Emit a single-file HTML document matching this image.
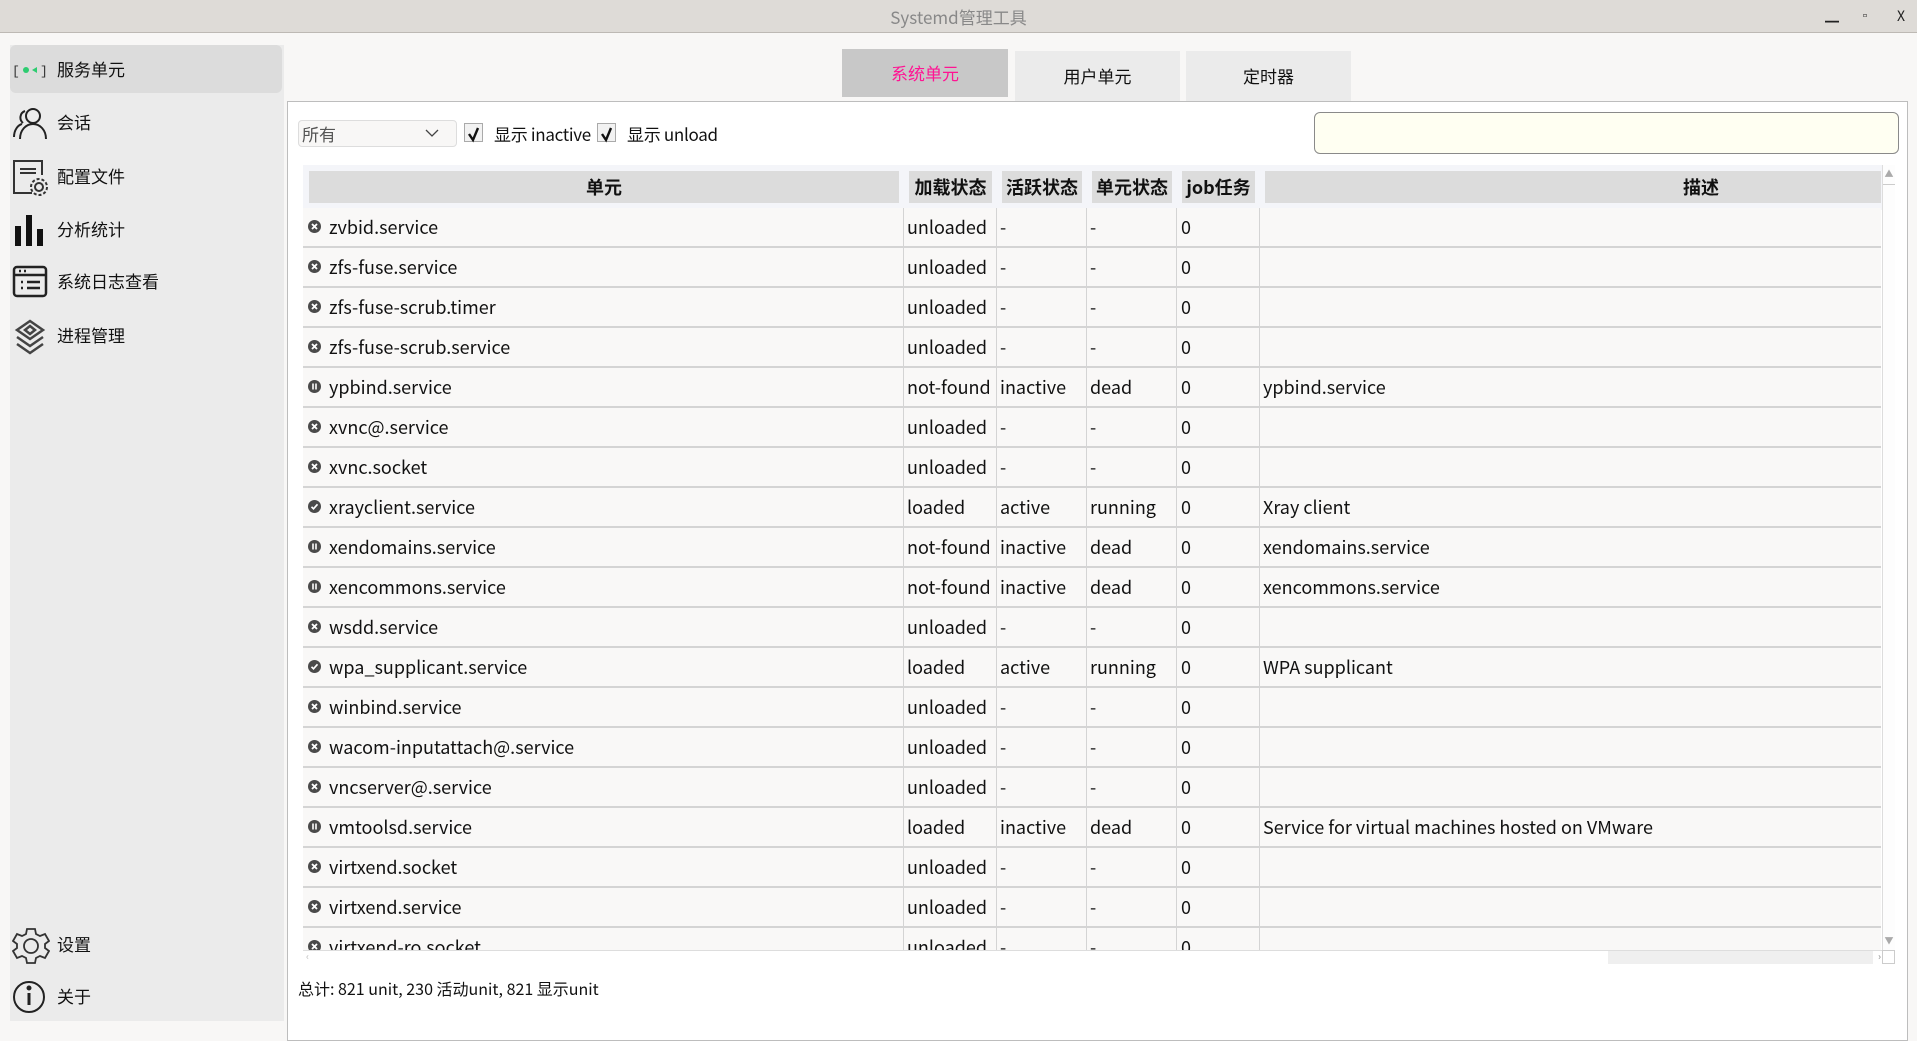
<!DOCTYPE html>
<html><head><meta charset="utf-8"><style>
*{margin:0;padding:0;box-sizing:border-box}
body{width:1917px;height:1027px;background:#f8f7f6;font-family:"Noto Sans CJK SC","Liberation Sans",sans-serif;color:#111;position:relative;overflow:hidden}
.abs{position:absolute}
#title{left:0;top:0;width:1917px;height:33px;background:#dedbd7;border-bottom:1px solid #bdb9b4;text-align:center;font-size:17px;line-height:33px;color:#888}
#side{left:10px;top:45px;width:274px;height:976px;background:#ebebeb}
.it{position:absolute;left:10px;width:272px;height:48px;font-size:17px;line-height:48px;padding-left:47px}
.it svg{position:absolute;left:2px;top:7px}
.sel{background:#dcdcdc;border-radius:6px}
.tab{position:absolute;text-align:center;font-size:17px;background:#ebebeb}
#panel{left:287px;top:101px;width:1621px;height:940px;background:#fff;border:1px solid #bdbdbd}
.hd{position:absolute;top:171px;height:32px;background:#dcdcdc;font-weight:bold;font-size:18px;line-height:32px;text-align:center}
.row{position:absolute;left:303px;width:1578px;height:40px;border-bottom:2px solid #d4d4d4;background:#f9f8f7;font-size:18px;line-height:38px}
.row span{position:absolute;top:0}
.row svg{position:absolute;left:5px;top:12px}
.vl{position:absolute;top:208px;width:1px;height:742px;background:#d4d4d4}
.cb{position:absolute;width:19px;height:19px;border:1px solid #aaa;background:#f2f2f2}
</style></head><body>
<div id="title" class="abs">Systemd管理工具
<span style="position:absolute;right:78px;top:0;color:#222;font-size:14px">▁</span>
<span style="position:absolute;right:46px;top:-1px;color:#222;font-size:12px">▫</span>
<span style="position:absolute;right:12px;top:0;color:#222;font-size:14px">X</span></div>
<div id="side" class="abs"></div>
<div class="it sel" style="top:45px"><svg width="36" height="34" viewBox="0 0 36 34"><text x="0" y="23" font-size="13" font-family="Liberation Mono" fill="#333">[</text><circle cx="14" cy="18" r="3" fill="#2ecc71"/><path d="M25 15 L20 18 L25 21Z" fill="#2ecc71"/><text x="28" y="23" font-size="13" font-family="Liberation Mono" fill="#333">]</text></svg>服务单元</div>
<div class="it" style="top:98px"><svg width="36" height="36" viewBox="0 0 36 36" fill="none" stroke="#222" stroke-width="2"><circle cx="21" cy="11" r="7"/><path d="M8 34c0-9 6-15 13-15s13 6 13 15"/><path d="M13 6a7 7 0 0 0-2 12M2 32c0-7 4-12 8-13"/></svg>会话</div>
<div class="it" style="top:152px"><svg width="38" height="38" viewBox="0 0 38 38" fill="none" stroke="#333" stroke-width="2"><path d="M20 34H2V2h28v14"/><path d="M8 10h16M8 14h16"/><circle cx="27" cy="28" r="4"/><circle cx="27" cy="28" r="8" stroke-dasharray="3 2"/></svg>配置文件</div>
<div class="it" style="top:205px"><svg width="36" height="36" viewBox="0 0 36 36" fill="#111"><rect x="3" y="14" width="6" height="20"/><rect x="14" y="3" width="6" height="31"/><rect x="25" y="17" width="6" height="17"/></svg>分析统计</div>
<div class="it" style="top:257px"><svg width="38" height="36" viewBox="0 0 38 36" fill="none" stroke="#222" stroke-width="2.5"><rect x="2" y="3" width="32" height="29" rx="3"/><path d="M2 11h32M7 7h2M12 7h2M9 18h2M15 18h13M9 24h2M15 24h13"/></svg>系统日志查看</div>
<div class="it" style="top:311px"><svg width="36" height="38" viewBox="0 0 36 38" fill="none" stroke="#444" stroke-width="2.5"><path d="M18 3L31 12 18 21 5 12Z"/><path d="M13 12l5-4 5 4-5 4z"/><path d="M5 19l13 9 13-9M5 26l13 9 13-9"/></svg>进程管理</div>
<div class="it" style="top:920px"><svg width="38" height="38" viewBox="0 0 38 38" fill="none" stroke="#333" stroke-width="1.8"><path d="M15 2h8l1 5 4 2 5-2 4 7-4 3v4l4 3-4 7-5-2-4 2-1 5h-8l-1-5-4-2-5 2-4-7 4-3v-4l-4-3 4-7 5 2 4-2z"/><circle cx="19" cy="19" r="7"/></svg>设置</div>
<div class="it" style="top:972px"><svg width="36" height="36" viewBox="0 0 36 36" fill="none" stroke="#222" stroke-width="2"><circle cx="17" cy="18" r="15"/><path d="M17 14v12" stroke-width="3"/><circle cx="17" cy="9" r="1.5" fill="#222"/></svg>关于</div>

<div id="panel" class="abs"></div>
<div class="tab" style="left:842px;top:49px;width:166px;height:48px;line-height:48px;background:#c8c8c8;color:#ff1493">系统单元</div>
<div class="tab" style="left:1015px;top:51px;width:165px;height:50px;line-height:50px">用户单元</div>
<div class="tab" style="left:1186px;top:51px;width:165px;height:50px;line-height:50px">定时器</div>

<div class="abs" style="left:298px;top:120px;width:159px;height:27px;border:1px solid #ddd;border-radius:4px;background:#f8f7f6;font-size:17px;line-height:25px;padding-left:3px;color:#555">所有<svg class="abs" style="left:126px;top:8px" width="14" height="9" viewBox="0 0 14 9" fill="none" stroke="#444" stroke-width="1.3"><path d="M1 1l6 6 6-6"/></svg></div>
<div class="cb" style="left:464px;top:123px"><svg width="17" height="17" viewBox="0 0 17 17" fill="none" stroke="#111" stroke-width="2.4"><path d="M4 8l4 6 5-12"/></svg></div>
<div class="abs" style="left:494px;top:120px;font-size:17px;line-height:27px;letter-spacing:-0.3px">显示 inactive</div>
<div class="cb" style="left:597px;top:123px"><svg width="17" height="17" viewBox="0 0 17 17" fill="none" stroke="#111" stroke-width="2.4"><path d="M4 8l4 6 5-12"/></svg></div>
<div class="abs" style="left:627px;top:120px;font-size:17px;line-height:27px;letter-spacing:-0.3px">显示 unload</div>
<div class="abs" style="left:1314px;top:112px;width:585px;height:42px;border:1.5px solid #8a8a8a;border-radius:6px;background:#fffff2"></div>

<div class="abs" style="left:303px;top:165px;width:1580px;height:45px;background:#f4f5f9"></div>
<div class="hd" style="left:309px;width:590px">单元</div>
<div class="hd" style="left:909px;width:83px">加载状态</div>
<div class="hd" style="left:1002px;width:80px">活跃状态</div>
<div class="hd" style="left:1092px;width:80px">单元状态</div>
<div class="hd" style="left:1182px;width:73px">job任务</div>
<div class="hd" style="left:1265px;width:616px;text-align:left;padding-left:418px">描述</div>

<div class="abs" style="left:303px;top:208px;width:1580px;height:742px;overflow:hidden" id="rows">
</div>
<div class="abs" style="left:1882px;top:165px;width:13px;height:785px;background:#fdfdfd;border-left:1px solid #ddd"><div style="color:#aaa;font-size:9px;text-align:center;margin-top:2px">▲</div><div style="position:absolute;top:19px;left:0;width:12px;height:1px;background:#ccc"></div><div style="position:absolute;bottom:3px;width:12px;color:#aaa;font-size:9px;text-align:center">▼</div></div>
<div class="abs" style="left:303px;top:950px;width:1580px;height:14px;background:#fff;border-top:1px solid #ddd"><div style="position:absolute;left:1305px;top:0;width:265px;height:13px;background:#efefef"></div><span style="position:absolute;left:3px;top:-3px;color:#bbb;font-size:10px">‹</span><span style="position:absolute;right:2px;top:-3px;color:#888;font-size:10px">›</span></div>
<div class="abs" style="left:1882px;top:950px;width:13px;height:14px;border:1px solid #ccc;background:#fff"></div>
<div class="abs" style="left:298px;top:976px;font-size:16px;line-height:24px">总计: 821 unit, 230 活动unit, 821 显示unit</div>

<script>
const X='<svg width="13" height="13" viewBox="0 0 13 13"><circle cx="6.5" cy="6.5" r="6.5" fill="#4a4a4a"/><path d="M4 4l5 5M9 4l-5 5" stroke="#fff" stroke-width="1.8"/></svg>';
const P='<svg width="13" height="13" viewBox="0 0 13 13"><circle cx="6.5" cy="6.5" r="6.5" fill="#4a4a4a"/><path d="M5 3.5v6M8 3.5v6" stroke="#fff" stroke-width="1.6"/></svg>';
const C='<svg width="13" height="13" viewBox="0 0 13 13"><circle cx="6.5" cy="6.5" r="6.5" fill="#4a4a4a"/><path d="M3.5 6.8l2 2 4-4.5" stroke="#fff" stroke-width="1.7" fill="none"/></svg>';
const d=[[X,'zvbid.service','unloaded','-','-','0',''],[X,'zfs-fuse.service','unloaded','-','-','0',''],[X,'zfs-fuse-scrub.timer','unloaded','-','-','0',''],[X,'zfs-fuse-scrub.service','unloaded','-','-','0',''],[P,'ypbind.service','not-found','inactive','dead','0','ypbind.service'],[X,'xvnc@.service','unloaded','-','-','0',''],[X,'xvnc.socket','unloaded','-','-','0',''],[C,'xrayclient.service','loaded','active','running','0','Xray client'],[P,'xendomains.service','not-found','inactive','dead','0','xendomains.service'],[P,'xencommons.service','not-found','inactive','dead','0','xencommons.service'],[X,'wsdd.service','unloaded','-','-','0',''],[C,'wpa_supplicant.service','loaded','active','running','0','WPA supplicant'],[X,'winbind.service','unloaded','-','-','0',''],[X,'wacom-inputattach@.service','unloaded','-','-','0',''],[X,'vncserver@.service','unloaded','-','-','0',''],[P,'vmtoolsd.service','loaded','inactive','dead','0','Service for virtual machines hosted on VMware'],[X,'virtxend.socket','unloaded','-','-','0',''],[X,'virtxend.service','unloaded','-','-','0',''],[X,'virtxend-ro.socket','unloaded','-','-','0','']];
let h='';d.forEach((r,i)=>{h+=`<div class="row" style="left:0;top:${i*40}px">${r[0]}<span style="left:26px">${r[1]}</span><span style="left:604px">${r[2]}</span><span style="left:697px">${r[3]}</span><span style="left:787px">${r[4]}</span><span style="left:878px">${r[5]}</span><span style="left:960px">${r[6]}</span></div>`});
[600,693,783,873,956].forEach(x=>h+=`<div class="vl" style="left:${x}px;top:0"></div>`);
document.getElementById('rows').innerHTML=h;
</script>
</body></html>
